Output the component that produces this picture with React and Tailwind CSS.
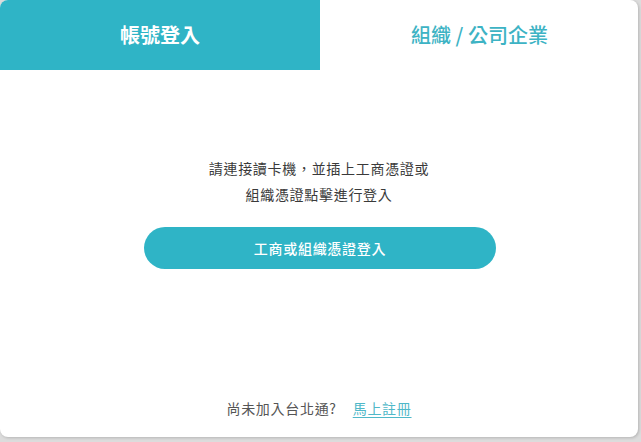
export default function App() {
    return (
        <div className="w-[641px] h-[442px] bg-[#dcdcdc] font-['Noto_Sans_CJK_TC','Noto_Sans',sans-serif]">
            <div className="w-[638px] h-[437px] bg-white rounded-lg shadow-[1px_1px_3px_rgba(0,0,0,0.18)] flex flex-col overflow-hidden">
                {/* Tabs */}
                <div className="flex h-[70px] shrink-0">
                    <div className="w-[320px] bg-[#2fb4c6] flex items-center justify-center text-white text-[20px] font-bold">
                        帳號登入
                    </div>
                    <div className="flex-1 flex items-center justify-center text-[#3db3c4] text-[20px] font-medium pl-[1px]">
                        組織 / 公司企業
                    </div>
                </div>

                {/* Body */}
                <div className="flex-1 flex flex-col items-center pt-[85px] text-[14px] tracking-[0.7px] text-[#3a3a3a]">
                    <p className="leading-[26px] text-center">
                        請連接讀卡機，並插上工商憑證或
                        <br />
                        組織憑證點擊進行登入
                    </p>
                    <button className="mt-[20px] ml-[2px] w-[352px] h-[42px] rounded-full bg-[#2fb4c6] text-white text-[14px] font-medium tracking-[0.7px]">
                        工商或組織憑證登入
                    </button>

                    <div className="mt-auto mb-[19px] flex items-center gap-[16px] leading-[20px] text-[#555]">
                        <span>尚未加入台北通?</span>
                        <a href="#" className="text-[#4fb8c8] underline underline-offset-[3px]">馬上註冊</a>
                    </div>
                </div>
            </div>
        </div>
    );
}
